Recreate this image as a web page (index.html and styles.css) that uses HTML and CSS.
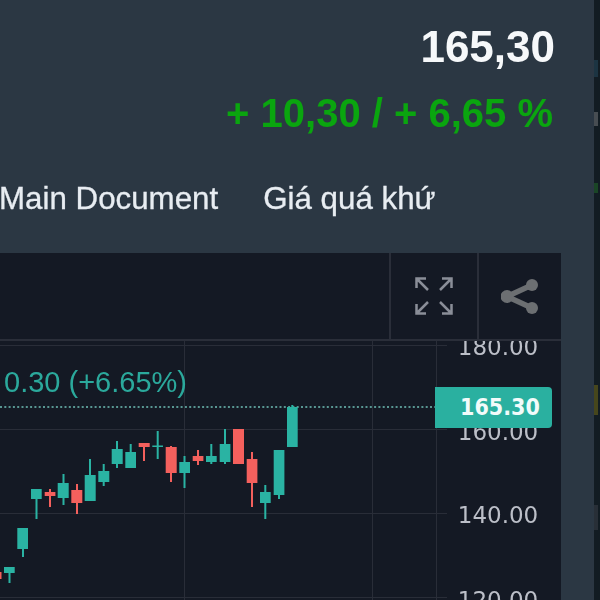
FILE: index.html
```html
<!DOCTYPE html>
<html lang="en">
<head>
    <meta charset="UTF-8">
    <meta name="viewport" content="width=device-width, initial-scale=1.0">
    <link rel="stylesheet" href="styles.css">
    <title>Giá cổ phiếu</title>
</head>
<body>
    <div class="layout">
        <div class="main">
            <div class="quote">
                <div class="quote-price">165,30</div>
                <div class="quote-change">+ 10,30 / + 6,65 %</div>
            </div>

            <div class="tabs">
                <span class="tab">Main Document</span>
                <span class="tab">Giá quá khứ</span>
            </div>

            <div class="chart-panel">
                <div class="toolbar">
                    <div class="tool-btn tool-expand">
                        <svg width="38" height="38" viewBox="0 0 38 38" fill="none" stroke="#8a8e98" stroke-width="2.500">
                            <path d="M1.500 11V1.500H11M1.500 1.500L13 13"/>
                            <path d="M27 1.500H36.500V11M36.500 1.500L25 13"/>
                            <path d="M1.500 27V36.500H11M1.500 36.500L13 25"/>
                            <path d="M36.500 27V36.500H27M36.500 36.500L25 25"/>
                        </svg>
                    </div>
                    <div class="tool-btn tool-share">
                        <svg width="38" height="38" viewBox="0 0 38 38" fill="#6c6f72" stroke="#6c6f72">
                            <path d="M31 8L6 19.500L31 31" fill="none" stroke-width="5.500"/>
                            <circle cx="6" cy="19.500" r="6.500" stroke="none"/>
                            <circle cx="31" cy="8" r="6" stroke="none"/>
                            <circle cx="31" cy="31" r="6" stroke="none"/>
                        </svg>
                    </div>
                </div>

                <div class="chart-body">
                    <svg class="chart-svg" width="561" height="259" viewBox="0 341 561 259">
                        <g class="grid">
                            <path d="M0 345.500H447M0 429.500H447M0 513.500H447M0 597.500H447"/>
                            <path d="M184.500 341V600M372.500 341V600M436.500 341V600"/>
                        </g>

                        <path class="last-line" d="M0 407H436"/>
                        <path class="last-tick" d="M436 407H447"/>

                        <g class="axis">
                            <text x="498" y="355">180.00</text>
                            <text x="498" y="440">160.00</text>
                            <text x="498" y="523">140.00</text>
                            <text x="498" y="608">120.00</text>
                        </g>

                        <g class="candles-down">
                            <path d="M50 489V507M77 484V514M144 443V461M171 446V482M198 450V465M252 452V507"/>
                            <rect x="-3" y="572" width="4.500" height="7"/>
                            <rect x="44.700" y="492" width="10.700" height="4"/>
                            <rect x="71.300" y="490" width="11" height="13"/>
                            <rect x="138.700" y="443" width="11" height="4"/>
                            <rect x="165.700" y="447" width="11" height="26"/>
                            <rect x="192.700" y="456" width="10.700" height="5"/>
                            <rect x="233" y="429" width="11" height="35"/>
                            <rect x="246.700" y="459" width="10.700" height="24"/>
                        </g>

                        <g class="candles-up">
                            <path d="M9.500 567V583M23 528V557M36.500 489V519M63.500 474V505M90 459V501M103.700 464V486M117 441V468M130.700 444V468M157.700 431V459M184.500 456V488M211.300 444V464M225 429V464M265.300 485V519M279 450V499M292.300 405V447"/>
                            <rect x="4" y="567" width="10.700" height="6"/>
                            <rect x="17.300" y="528" width="10.700" height="21"/>
                            <rect x="31" y="489" width="10.700" height="10"/>
                            <rect x="57.700" y="483" width="11" height="15"/>
                            <rect x="84.700" y="475" width="11" height="26"/>
                            <rect x="98.300" y="471" width="11" height="11"/>
                            <rect x="111.700" y="449" width="11" height="15"/>
                            <rect x="125.300" y="452" width="10.700" height="16"/>
                            <rect x="152.300" y="445.500" width="10.700" height="1.500"/>
                            <rect x="179.300" y="462" width="10.700" height="11"/>
                            <rect x="206" y="456" width="10.700" height="6"/>
                            <rect x="219.700" y="444" width="10.700" height="18"/>
                            <rect x="260" y="492" width="10.700" height="11"/>
                            <rect x="273.700" y="450" width="10.700" height="45"/>
                            <rect x="287" y="407" width="10.700" height="40"/>
                        </g>
                    </svg>

                    <div class="legend">0.30 (+6.65%)</div>
                    <div class="price-tag">165.30</div>
                </div>
            </div>
        </div>

        <div class="edge-strip">
            <span class="edge-mark edge-blue"></span>
            <span class="edge-mark edge-grey"></span>
            <span class="edge-mark edge-green"></span>
            <span class="edge-mark edge-yellow"></span>
            <span class="edge-mark edge-grey-low"></span>
        </div>
    </div>
</body>
</html>
```

FILE: styles.css
```css
body {
    font-family: "Liberation Sans", Arial, sans-serif;
    background: #2b3743;
    margin: 0;
    padding: 0;
    overflow: hidden;
}

/* the whole shot is slightly soft */
.layout {
    display: flex;
    height: 600px;
    filter: blur(0.5px);
}

.main {
    flex: 1;
    min-width: 0;
}

.edge-strip {
    width: 6px;
    height: 600px;
    background: #121c23;
    position: relative;
}

.edge-mark {
    position: absolute;
    left: 0;
    width: 4px;
}

.edge-blue {
    top: 60px;
    height: 17px;
    background: #1c3442;
}

.edge-grey {
    top: 112px;
    height: 14px;
    background: #474d52;
}

.edge-green {
    top: 183px;
    height: 10px;
    background: #1a4526;
}

.edge-yellow {
    top: 385px;
    height: 30px;
    background: #46461c;
}

.edge-grey-low {
    top: 505px;
    height: 25px;
    background: #282f37;
}

/* price header */
.quote {
    height: 128px;
    padding: 22px 39px 0 0;
    box-sizing: border-box;
    text-align: right;
}

.quote-price {
    font-size: 44px;
    line-height: 50px;
    font-weight: bold;
    color: #f6f8fa;
}

.quote-change {
    margin: 18px 2px 0 0;
    font-size: 40px;
    line-height: 46px;
    font-weight: bold;
    color: #0aa50f;
}

/* tabs */
.tabs {
    display: flex;
    gap: 45px;
    height: 125px;
    margin-left: -1px;
    padding-top: 53px;
    box-sizing: border-box;
}

.tab {
    font-size: 31.300px;
    line-height: 36px;
    color: #e8edf2;
    -webkit-text-stroke: 0.3px #e8edf2;
}

/* chart */
.chart-panel {
    width: 561px;
    height: 347px;
    background: #141924;
}

.toolbar {
    display: flex;
    justify-content: flex-end;
    height: 88px;
    box-sizing: border-box;
    border-bottom: 2px solid #2a2e39;
}

.tool-btn {
    display: flex;
    align-items: center;
    justify-content: center;
    border-left: 2px solid #2a2e39;
    box-sizing: border-box;
}

.tool-expand {
    width: 88px;
}

.tool-share {
    width: 84px;
}

.chart-body {
    position: relative;
    height: 259px;
    overflow: hidden;
}

.chart-svg {
    display: block;
}

.grid path {
    stroke: #292d38;
    stroke-width: 1;
    fill: none;
}

.last-line {
    stroke: #6fc0b7;
    stroke-width: 1.500;
    stroke-dasharray: 2 2.300;
    fill: none;
}

.last-tick {
    stroke: #d9f0ed;
    stroke-width: 1;
}

.axis text {
    font-family: "DejaVu Sans", sans-serif;
    font-size: 23px;
    fill: #bcbfc8;
    text-anchor: middle;
}

.candles-up rect {
    fill: #2ab3a3;
}

.candles-up path {
    stroke: #2ab3a3;
    stroke-width: 2;
    fill: none;
}

.candles-down rect {
    fill: #f4605d;
}

.candles-down path {
    stroke: #f4605d;
    stroke-width: 2;
    fill: none;
}

.legend {
    position: absolute;
    left: 4px;
    top: 24px;
    font-size: 29px;
    line-height: 34px;
    color: #2ba99c;
}

.price-tag {
    position: absolute;
    left: 435px;
    top: 46px;
    width: 117px;
    height: 41px;
    box-sizing: border-box;
    padding-left: 25px;
    background: #2ab0a0;
    border-radius: 0 4px 4px 0;
    font-family: "DejaVu Sans Condensed", "DejaVu Sans", sans-serif;
    font-size: 23px;
    font-weight: bold;
    line-height: 41px;
    color: #f2fbfa;
}
```
